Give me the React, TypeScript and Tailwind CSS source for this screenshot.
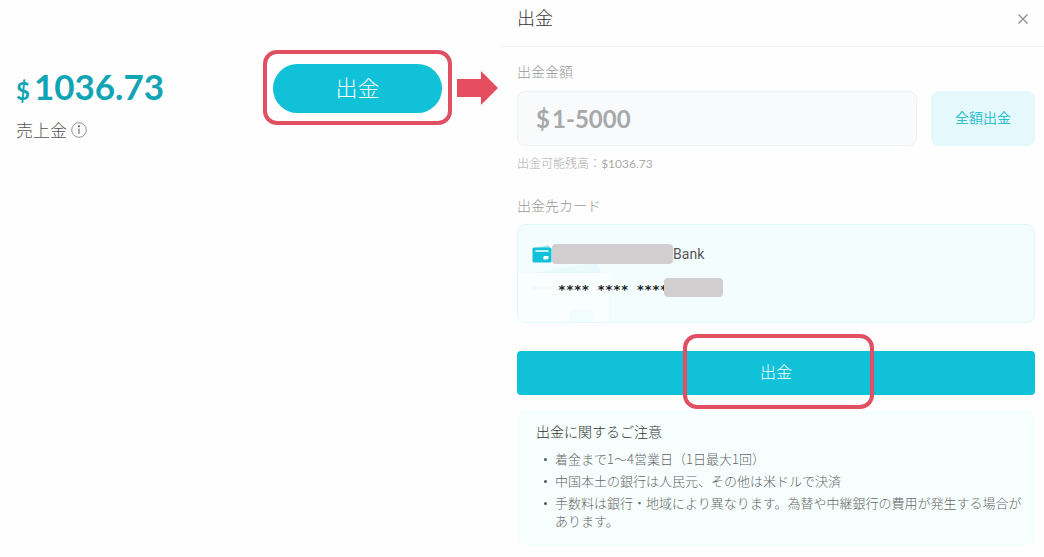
import React from 'react';

const notes = [
  '着金まで1～4営業日（1日最大1回）',
  '中国本土の銀行は人民元、その他は米ドルで決済',
  '手数料は銀行・地域により異なります。為替や中継銀行の費用が発生する場合があります。',
];

const InfoIcon: React.FC = () => (
  <svg viewBox="0 0 16 16" className="w-4 h-4" fill="none" aria-hidden="true">
    <circle cx="8" cy="8" r="7.3" stroke="#8a8a8a" strokeWidth="0.9" />
    <path d="M8 6.6v5.4" stroke="#666" strokeWidth="1.1" />
    <circle cx="8" cy="4.2" r="1" fill="#555" />
  </svg>
);

const ArrowIcon: React.FC = () => (
  <svg viewBox="0 0 41 34" className="w-[41px] h-[34px] shrink-0" aria-hidden="true">
    <path d="M0 8h24V0l17 17-17 17v-8H0z" fill="#e54d60" />
  </svg>
);

const WalletIcon: React.FC = () => (
  <svg viewBox="0 0 20 18" className="w-5 h-[18px] shrink-0" aria-hidden="true">
    <path d="M2 3.2 15.5.4c.9-.2 1.5.2 1.7 1L17.6 4H2z" fill="#a5e6ee" />
    <rect x="0.5" y="2.6" width="19" height="15" rx="1.6" fill="#10c1d8" />
    <path d="M3.4 6h13.2" stroke="#fff" strokeWidth="1.3" />
    <path d="M12.7 11h3.8v1.8c0 1-.7 1.7-1.7 1.7h-3.4v-2.2c0-.8.5-1.3 1.3-1.3z" fill="#fff" />
  </svg>
);

// Large faded wallet in the corner of the bank card
const WalletWatermark: React.FC = () => (
  <svg viewBox="0 0 92 60" className="absolute bottom-0 left-0 w-[92px] h-[60px]" aria-hidden="true">
    <path d="M14 11 76 1c3 0 4 1 5 4l2 6z" fill="#e9fafd" />
    <path d="M0 11h87c3 0 4 1 4 4v45H0z" fill="#f9fefe" />
    <path d="M14 26h28" stroke="#f3fbfc" strokeWidth="4" />
    <path d="M61 47h14v13H51v-4c0-5 4-9 10-9z" fill="#f1fcfd" />
  </svg>
);

const BalancePanel: React.FC = () => (
  <section className="w-[48%] shrink-0 flex items-start justify-between pl-4 pr-[3px] pt-[50px]">
    <div className="pt-[15px]">
      <p className="flex items-baseline gap-1 font-[Lato,sans-serif] font-bold text-[#10a4b5] leading-[42px]">
        <span className="text-2xl">$</span>
        <span className="text-[35px]">1036.73</span>
      </p>
      <div className="flex items-center gap-1 mt-[13px] text-[17px] leading-5 text-[#555]">
        売上金
        <InfoIcon />
      </div>
    </div>
    <div className="flex items-center gap-[5px]">
      <div className="border-4 border-[#e05062] rounded-[14px] px-[6px] pt-[10px] pb-2">
        <button className="block w-[169px] h-[49px] pb-1 rounded-full bg-[#10c1d8] text-white text-[22px]">
          出金
        </button>
      </div>
      <ArrowIcon />
    </div>
  </section>
);

const WithdrawPanel: React.FC = () => (
  <section className="flex-1 min-w-0">
    <header className="flex items-center justify-between h-[47px] pl-4 pr-3 pb-2 border-b border-[#eef1f1]">
      <h1 className="pb-1 text-lg text-[#333]">出金</h1>
      <button aria-label="閉じる" className="p-1">
        <svg viewBox="0 0 10 10" className="w-[10px] h-[10px]" aria-hidden="true">
          <path d="M.5.5l9 9M9.5.5l-9 9" stroke="#8b9095" strokeWidth="1.3" />
        </svg>
      </button>
    </header>

    <div className="pl-4 pr-[9px] pt-[14px]">
      <label htmlFor="amount" className="block text-[14px] leading-5 text-[#999]">
        出金金額
      </label>
      <div className="flex gap-[14px] mt-[10px]">
        <div className="flex-1 min-w-0 flex items-center gap-[2px] h-[55px] px-[18px] rounded-lg border border-[#edf2f3] bg-[#f9fafc] font-[Lato,sans-serif] font-bold text-2xl text-[#a6a8aa]">
          <span>$</span>
          <input
            id="amount"
            type="text"
            placeholder="1-5000"
            className="w-full min-w-0 bg-transparent outline-none placeholder:text-[#a6a8aa]"
          />
        </div>
        <button className="w-[104px] h-[55px] pb-[2px] rounded-lg bg-[#e5f8fb] text-[#2fc0d1] text-[14px] font-normal">
          全額出金
        </button>
      </div>
      <p className="mt-2 text-xs leading-[18px] text-[#aaa]">
        出金可能残高：<span className="font-[Lato,sans-serif] font-normal">$1036.73</span>
      </p>

      <h2 className="mt-[22px] text-[14px] leading-5 text-[#999]">出金先カード</h2>
      <div className="relative h-[99px] mt-[9px] pl-[14px] pt-[19px] rounded-lg border border-[#e2f6fa] bg-[#f4fdfe] overflow-hidden">
        <WalletWatermark />
        <div className="relative flex items-center h-5 font-[Roboto,sans-serif] font-normal text-[14px] text-[#555]">
          <WalletIcon />
          <span className="w-[121px] h-5 rounded bg-[#d0cecf]" />
          Bank
        </div>
        <div className="relative flex items-center h-5 mt-[13px] pl-[26px]">
          <span className="whitespace-pre font-['DejaVu_Sans_Mono',monospace] font-bold text-[13px] leading-5 pt-[6px] text-[#222]">
            **** **** ****
          </span>
          {/* Mask over the card digits */}
          <span className="absolute left-[132px] w-[59px] h-[19px] rounded bg-[#d0cecf]" />
        </div>
      </div>

      <div className="relative mt-7">
        <button className="block w-full h-11 pb-1 rounded bg-[#10c1d8] text-white text-base">出金</button>
        {/* Highlight frame over the submit button */}
        <div className="absolute -top-[17px] -bottom-[14px] left-[32%] right-[31%] border-4 border-[#e05062] rounded-[14px] pointer-events-none" />
      </div>

      <div className="mt-[15px] pl-[19px] pr-2 pt-[11px] pb-4 rounded-lg bg-[#f7fffe]">
        <h2 className="text-[14px] leading-5 text-[#333]">出金に関するご注意</h2>
        <ul className="mt-[9px] space-y-1 text-[13px] leading-[18px] text-[#666]">
          {notes.map((note) => (
            <li key={note} className="flex">
              <span className="w-[19px] shrink-0 flex justify-center pt-2">
                <span className="w-[3px] h-[3px] rounded-full bg-[#555]" />
              </span>
              <span>{note}</span>
            </li>
          ))}
        </ul>
      </div>
    </div>
  </section>
);

const App: React.FC = () => (
  <main className="flex min-h-screen bg-[#fefefe] font-light font-['Noto_Sans_CJK_JP',sans-serif]">
    <BalancePanel />
    <WithdrawPanel />
  </main>
);

export default App;
